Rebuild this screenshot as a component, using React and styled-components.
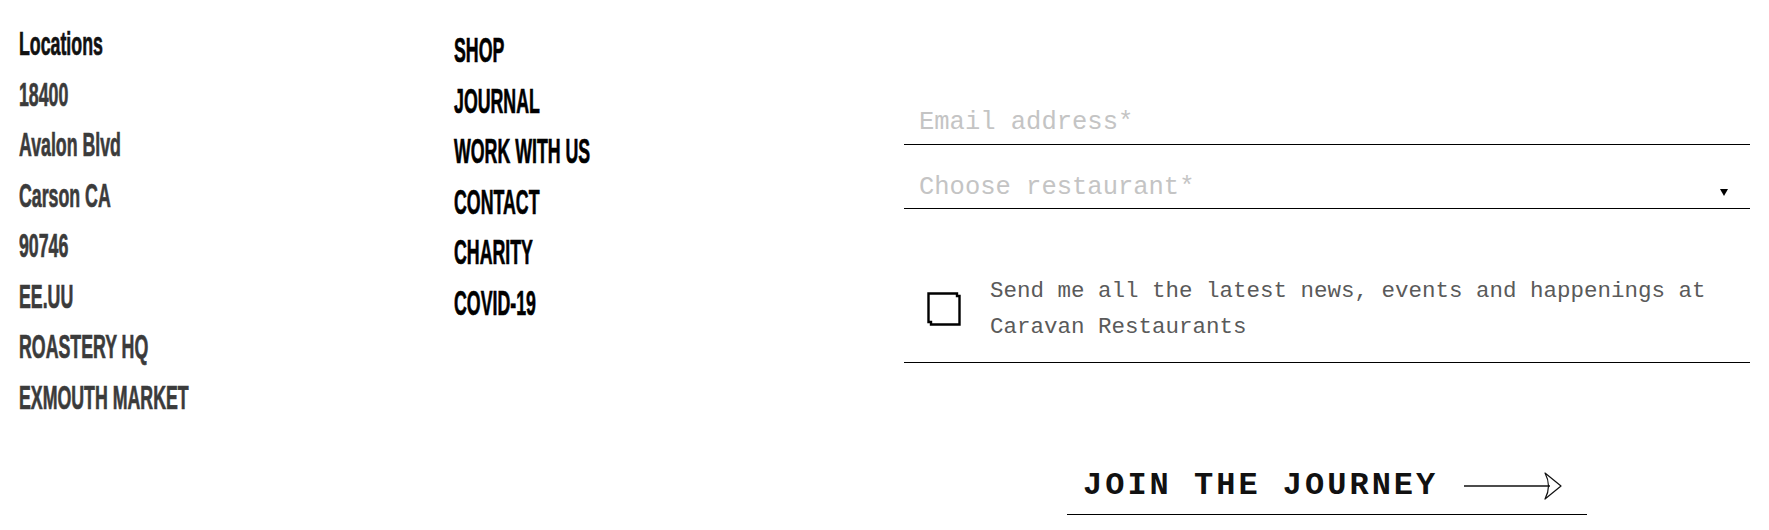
import React from 'react';
import styled, { createGlobalStyle } from 'styled-components';

const GlobalStyle = createGlobalStyle`
  html, body { margin: 0; padding: 0; background: #fff; }
  * { box-sizing: border-box; }
`;

const Footer = styled.footer`
  display: grid;
  grid-template-columns: 435px 450px 1fr;
  padding: 0 19px;
  width: 1769px;
  height: 530px;
  overflow: hidden;
`;

const Column = styled.div`
  display: flex;
  flex-direction: column;
  padding-top: ${p => p.$top}px;
`;

const Item = styled.span`
  display: block;
  font-family: "Liberation Sans", Arial, sans-serif;
  font-weight: 700;
  font-size: ${p => p.$size || 33.5}px;
  line-height: 50.5px;
  color: ${p => p.$color || '#3b3b3b'};
  -webkit-text-stroke: 0.7px ${p => p.$color || '#3b3b3b'};
  white-space: nowrap;
  transform: scaleX(${p => p.$scale || 0.53});
  transform-origin: left center;
`;

const Form = styled.form`
  display: flex;
  flex-direction: column;
  padding-top: 100px;
`;

const mono = `"Liberation Mono", "Courier New", monospace`;

const TextInput = styled.input`
  display: block;
  width: 100%;
  height: 45px;
  border: none;
  border-bottom: 1px solid #000;
  padding: 0 15px;
  margin: 0;
  outline: none;
  background: transparent;
  font-family: ${mono};
  font-size: 25.5px;
  color: #222;
  &::placeholder { color: #c4c4c4; }
`;

const SelectWrap = styled.div`
  position: relative;
  margin-top: 21px;
`;

const Select = styled.select`
  display: block;
  width: 100%;
  height: 43px;
  border: none;
  border-radius: 0;
  border-bottom: 1px solid #000;
  padding: 0 15px;
  margin: 0;
  outline: none;
  background: transparent;
  appearance: none;
  -webkit-appearance: none;
  font-family: ${mono};
  font-size: 25.5px;
  color: #c4c4c4;
`;

const Caret = styled.svg`
  position: absolute;
  right: 22px;
  top: 23px;
  pointer-events: none;
`;

const ConsentRow = styled.label`
  display: flex;
  align-items: center;
  gap: 29px;
  padding: 64px 0 17px 23px;
  border-bottom: 1px solid #000;
  cursor: pointer;
`;

const Box = styled.svg`
  flex: none;
  display: block;
`;

const ConsentText = styled.span`
  font-family: ${mono};
  font-size: 22.5px;
  line-height: 36px;
  color: #5a5a5a;
  max-width: 760px;
`;

const ButtonRow = styled.div`
  display: flex;
  justify-content: center;
  padding-top: 95px;
`;

const JoinButton = styled.button`
  display: flex;
  align-items: center;
  justify-content: flex-start;
  gap: 26px;
  width: 520px;
  padding: 8px 25px 8px 16px;
  border: none;
  border-bottom: 1px solid #000;
  background: transparent;
  cursor: pointer;
  font-family: ${mono};
  font-weight: 700;
  font-size: 32px;
  line-height: 40px;
  letter-spacing: 3px;
  color: #111;
`;

const ButtonLabel = styled.span`
  flex: none;
  white-space: nowrap;
`;

const Arrow = styled.svg`
  flex: none;
  display: block;
`;

const locations = ['18400', 'Avalon Blvd', 'Carson CA', '90746', 'EE.UU', 'ROASTERY HQ', 'EXMOUTH MARKET'];
const links = ['SHOP', 'JOURNAL', 'WORK WITH US', 'CONTACT', 'CHARITY', 'COVID-19'];

export default function App() {
  return (
    <>
      <GlobalStyle />
      <Footer>
        <Column $top={19}>
          <Item $color="#111">Locations</Item>
          {locations.map(l => <Item key={l}>{l}</Item>)}
        </Column>
        <Column $top={25}>
          {links.map(l => <Item key={l} $color="#000" $size={34.5} $scale={0.515}>{l}</Item>)}
        </Column>
        <Form onSubmit={e => e.preventDefault()}>
          <TextInput type="email" placeholder="Email address*" />
          <SelectWrap>
            <Select defaultValue="">
              <option value="" disabled>Choose restaurant*</option>
              <option value="exmouth">Exmouth Market</option>
              <option value="roastery">Roastery HQ</option>
            </Select>
            <Caret width="8" height="7" viewBox="0 0 8 7">
              <path d="M0 0 H8 L4 7 Z" fill="#000" />
            </Caret>
          </SelectWrap>
          <ConsentRow>
            <Box width="34" height="34" viewBox="0 0 34 34">
              <path d="M1.5 1.5 H30 V4 H32.5 V32.5 H4 V30 H1.5 Z" fill="none" stroke="#000" strokeWidth="2.4" />
            </Box>
            <ConsentText>Send me all the latest news, events and happenings at Caravan Restaurants</ConsentText>
          </ConsentRow>
          <ButtonRow>
            <JoinButton type="submit">
              <ButtonLabel>JOIN THE JOURNEY</ButtonLabel>
              <Arrow width="98" height="28" viewBox="0 0 98 28">
                <path d="M0 14 H86" stroke="#111" strokeWidth="1.4" />
                <path d="M81 1 L97 14 L81 27 Q88 14 81 1 Z" fill="none" stroke="#111" strokeWidth="1.2" strokeLinejoin="round" />
              </Arrow>
            </JoinButton>
          </ButtonRow>
        </Form>
      </Footer>
    </>
  );
}
